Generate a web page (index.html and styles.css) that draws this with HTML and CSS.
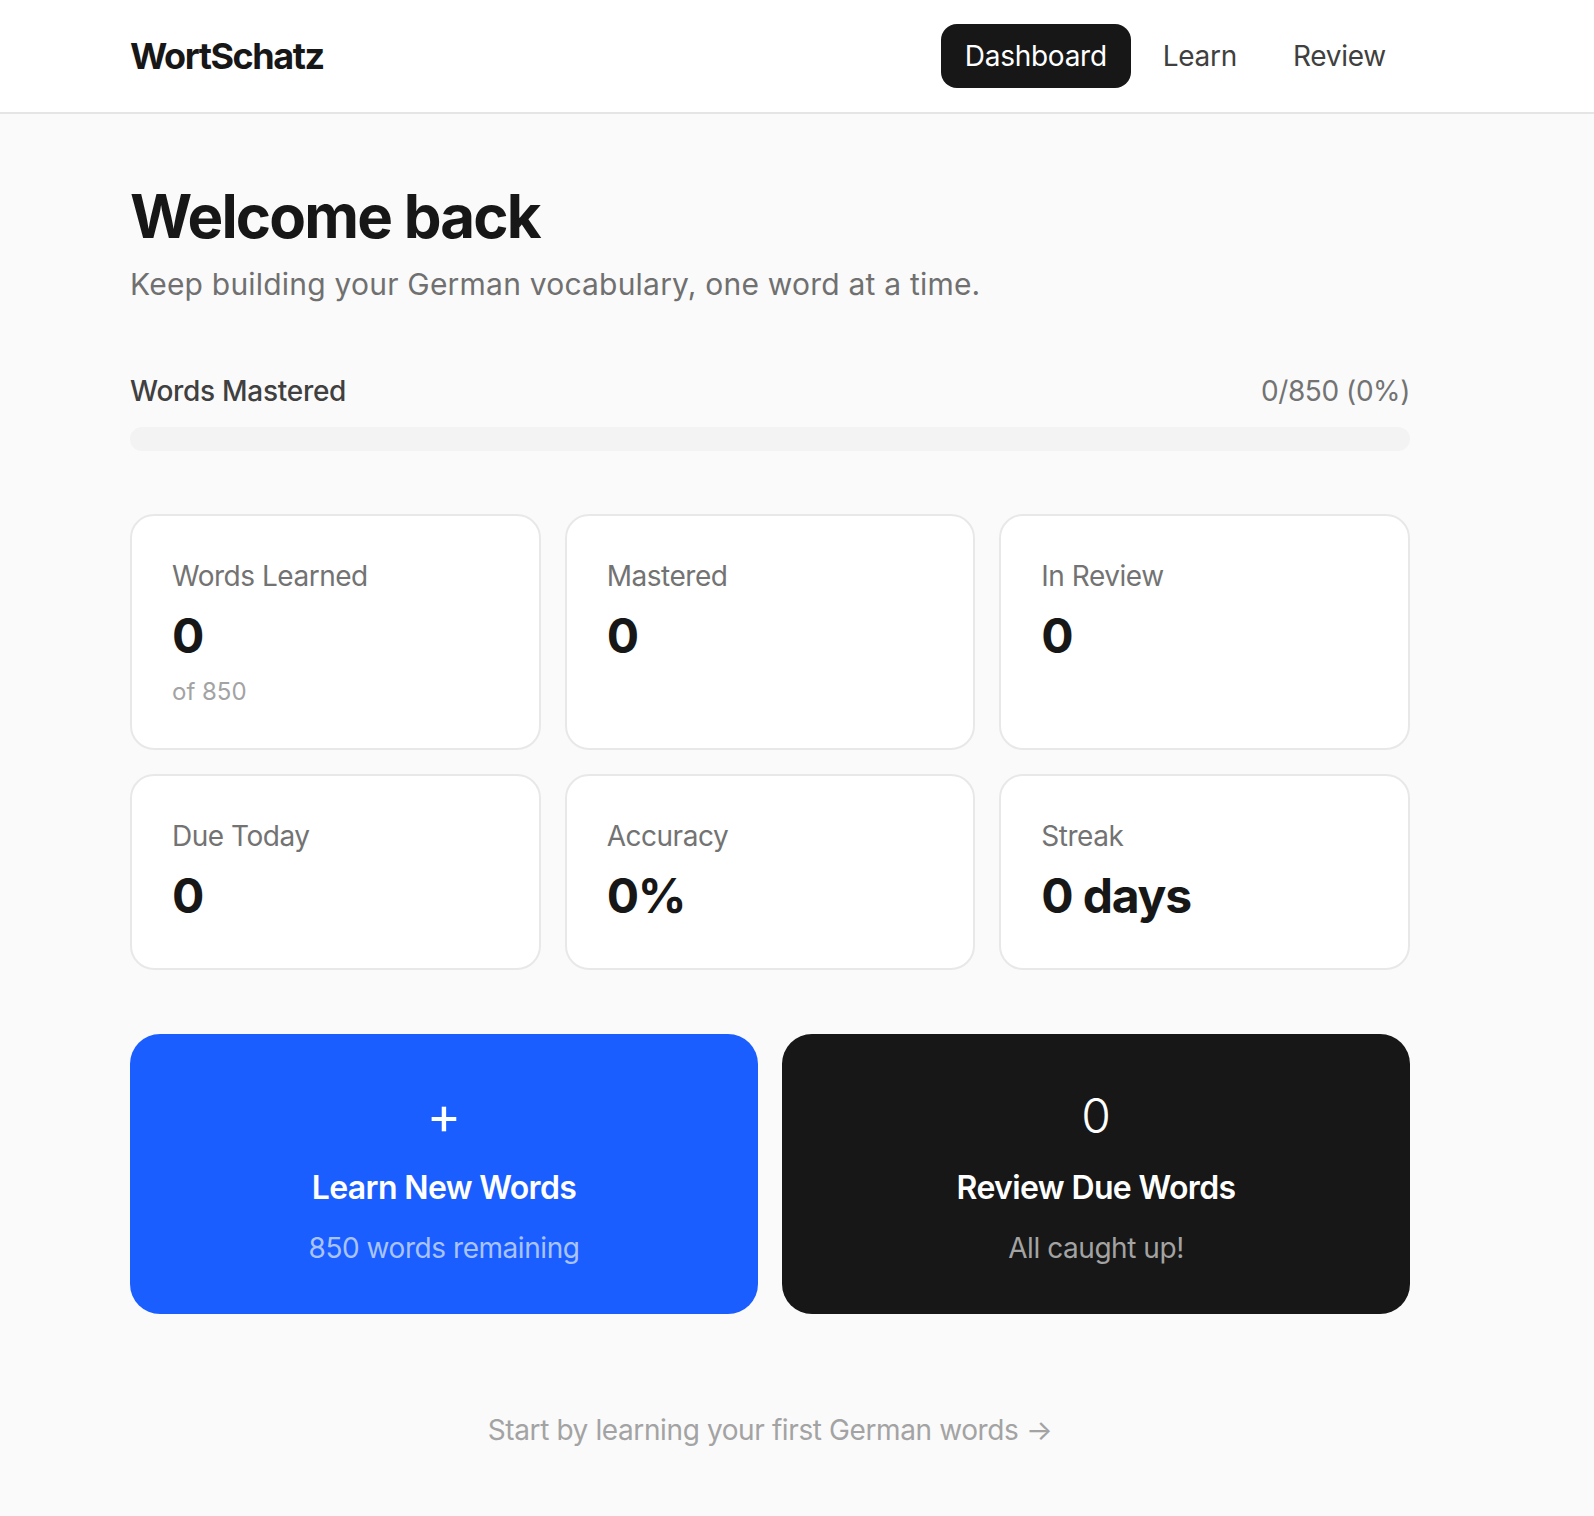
FILE: index.html
```html
<!DOCTYPE html>
<html>
<head>
    <meta name="viewport" content="width=device-width, initial-scale=1">
    <link rel="stylesheet" href="styles.css">
</head>
<body>

<header class="topbar">
    <div class="topbar-inner">
        <a class="logo" href="#">WortSchatz</a>
        <nav class="nav">
            <a class="nav-link active" href="#">Dashboard</a>
            <a class="nav-link" href="#">Learn</a>
            <a class="nav-link" href="#">Review</a>
        </nav>
    </div>
</header>

<main class="page">
    <h1 class="title">Welcome back</h1>
    <p class="subtitle">Keep building your German vocabulary, one word at a time.</p>

    <section class="progress">
        <div class="progress-head">
            <span class="progress-label">Words Mastered</span>
            <span class="progress-count">0/850 (0%)</span>
        </div>
        <div class="progress-track">
            <div class="progress-fill" style="width: 0%"></div>
        </div>
    </section>

    <section class="stats">
        <div class="stat">
            <div class="stat-label">Words Learned</div>
            <div class="stat-value">0</div>
            <div class="stat-sub">of 850</div>
        </div>
        <div class="stat">
            <div class="stat-label">Mastered</div>
            <div class="stat-value">0</div>
        </div>
        <div class="stat">
            <div class="stat-label">In Review</div>
            <div class="stat-value">0</div>
        </div>
        <div class="stat">
            <div class="stat-label">Due Today</div>
            <div class="stat-value">0</div>
        </div>
        <div class="stat">
            <div class="stat-label">Accuracy</div>
            <div class="stat-value">0%</div>
        </div>
        <div class="stat">
            <div class="stat-label">Streak</div>
            <div class="stat-value">0 days</div>
        </div>
    </section>

    <section class="actions">
        <a class="action action-learn" href="#">
            <span class="action-icon plus">+</span>
            <span class="action-title">Learn New Words</span>
            <span class="action-sub">850 words remaining</span>
        </a>
        <a class="action action-review" href="#">
            <span class="action-icon">0</span>
            <span class="action-title">Review Due Words</span>
            <span class="action-sub">All caught up!</span>
        </a>
    </section>

    <p class="hint">Start by learning your first German words &rarr;</p>
</main>

</body>
</html>
```

FILE: styles.css
```css
* {box-sizing: border-box;}
body {
    margin: 0;
    font-family: Inter, "Noto Sans", sans-serif;
    background-color: #fafafa;
    color: #171717;
}
a {text-decoration: none; color: inherit;}

/* Top bar */
.topbar {
    background-color: #fff;
    border-bottom: 2px solid #e5e5e5;
}
.topbar-inner {
    width: 1280px;
    margin-left: 130px;
    height: 112px;
    display: flex;
    align-items: center;
    justify-content: space-between;
}
.logo {
    font-size: 36px;
    font-weight: 700;
    letter-spacing: -0.04em;
    line-height: 56px;
}
.nav {
    display: flex;
    gap: 8px;
}
.nav-link {
    font-size: 28px;
    line-height: 40px;
    padding: 12px 24px;
    border-radius: 16px;
    color: #404040;
    letter-spacing: -0.01em;
}
.nav-link.active {
    background-color: #171717;
    color: #fff;
}

/* Main column */
.page {
    width: 1280px;
    margin-left: 130px;
    padding: 66px 0 64px 0;
}
.title {
    margin: 0;
    font-size: 60px;
    line-height: 72px;
    font-weight: 700;
    letter-spacing: -0.03em;
}
.subtitle {
    margin: 12px 0 0 0;
    font-size: 30px;
    line-height: 40px;
    letter-spacing: 0.007em;
    color: #707070;
}

/* Mastery bar */
.progress {margin-top: 67px;}
.progress-head {
    display: flex;
    justify-content: space-between;
    font-size: 28px;
    line-height: 40px;
}
.progress-label {color: #404040; font-weight: 500; letter-spacing: -0.01em;}
.progress-count {color: #737373; letter-spacing: -0.015em;}
.progress-track {
    margin-top: 16px;
    height: 24px;
    border-radius: 999px;
    background-color: #f3f3f3;
    overflow: hidden;
}
.progress-fill {height: 100%; background-color: #1b5eff;}

/* Stat cards */
.stats {
    margin-top: 63px;
    display: grid;
    grid-template-columns: repeat(3, 1fr);
    gap: 24px;
}
.stat {
    background-color: #fff;
    border: 2px solid #e8e8e8;
    border-radius: 24px;
    padding: 40px;
}
.stat-label {
    font-size: 28px;
    line-height: 40px;
    letter-spacing: -0.017em;
    color: #737373;
}
.stat-value {
    margin-top: 8px;
    font-size: 48px;
    line-height: 64px;
    font-weight: 700;
    letter-spacing: -0.025em;
}
.stat-sub {
    margin-top: 8px;
    font-size: 24px;
    line-height: 32px;
    color: #a3a3a3;
}

/* Big action buttons */
.actions {
    margin-top: 64px;
    display: grid;
    grid-template-columns: 1fr 1fr;
    gap: 24px;
}
.action {
    display: flex;
    flex-direction: column;
    align-items: center;
    padding: 50px 48px 46px 48px;
    border-radius: 30px;
    color: #fff;
}
.action-learn {background-color: #1b5eff;}
.action-review {background-color: #171717;}
.action-icon {
    font-size: 48px;
    line-height: 64px;
    font-weight: 300;
}
.action-icon.plus {font-weight: 400; font-size: 52px;}
.action-title {
    margin-top: 16px;
    font-size: 32px;
    line-height: 48px;
    font-weight: 600;
    letter-spacing: -0.02em;
}
.action-sub {
    margin-top: 16px;
    font-size: 28px;
    line-height: 40px;
    letter-spacing: -0.016em;
}
.action-learn .action-sub {color: #a9c3ff;}
.action-review .action-sub {color: #a3a3a3;}

.hint {
    margin: 96px 0 0 0;
    text-align: center;
    font-size: 28px;
    line-height: 40px;
    letter-spacing: -0.014em;
    color: #a3a3a3;
}
```
